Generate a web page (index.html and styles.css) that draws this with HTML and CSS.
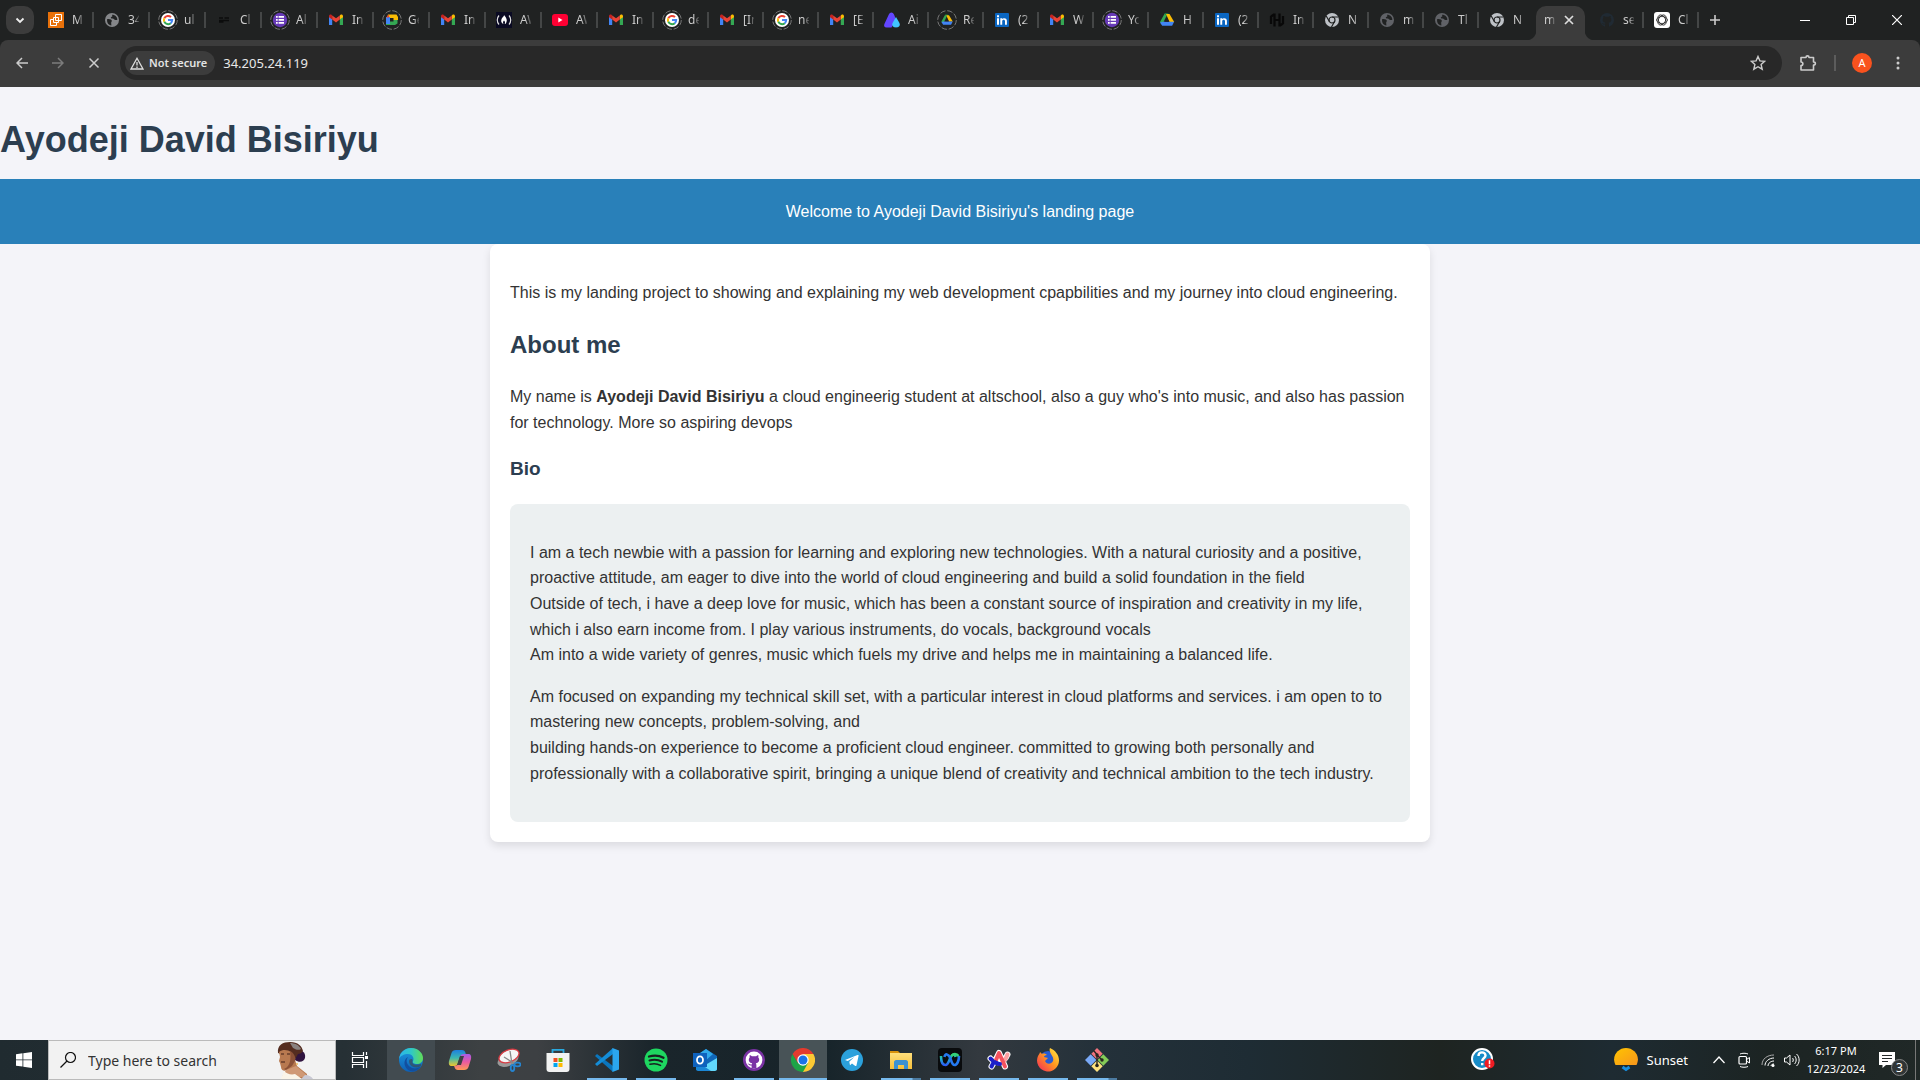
FILE: index.html
```html
<!DOCTYPE html>
<html lang="en">
<head>
<meta charset="utf-8">
<title>Ayodeji David Bisiriyu</title>
<link rel="stylesheet" href="styles.css">
</head>
<body>
<!-- Shared icon shapes -->
<svg class="defs" aria-hidden="true">
  <defs>
    <linearGradient id="gEdge" x1="0" y1="0" x2="1" y2="0"><stop offset="0" stop-color="#2bb5ec"/><stop offset=".5" stop-color="#2fc8c8"/><stop offset="1" stop-color="#62dd55"/></linearGradient>
    <linearGradient id="gEdge2" x1="0" y1="0" x2="0" y2="1"><stop offset="0" stop-color="#1d9ae0"/><stop offset="1" stop-color="#0d5fb4"/></linearGradient>
    <linearGradient id="gCopA" x1="0" y1="0" x2="0" y2="1"><stop offset="0" stop-color="#1d7fe0"/><stop offset=".5" stop-color="#3cb8b0"/><stop offset="1" stop-color="#f0c52c"/></linearGradient>
    <linearGradient id="gCopB" x1="0" y1="0" x2="0" y2="1"><stop offset="0" stop-color="#a55be8"/><stop offset=".5" stop-color="#ea5aa0"/><stop offset="1" stop-color="#ff9a55"/></linearGradient>
    <linearGradient id="gFox" x1="1" y1="0" x2="0" y2="1"><stop offset="0" stop-color="#fff04a"/><stop offset=".45" stop-color="#ff9a1f"/><stop offset="1" stop-color="#f5245c"/></linearGradient>
    <linearGradient id="gSun" x1="0" y1="0" x2="1" y2="1"><stop offset="0" stop-color="#ffc400"/><stop offset="1" stop-color="#f7961d"/></linearGradient>
    <linearGradient id="gWebex" x1="0" y1="0" x2="0" y2="1"><stop offset="0" stop-color="#2ad06c"/><stop offset=".4" stop-color="#20b0d0"/><stop offset="1" stop-color="#2a5df2"/></linearGradient>
    <linearGradient id="gFolder" x1="0" y1="0" x2="0" y2="1"><stop offset="0" stop-color="#ffdf7c"/><stop offset="1" stop-color="#f6bf3a"/></linearGradient>
  </defs>
  <symbol id="ring" viewBox="0 0 20 20"><circle cx="10" cy="10" r="9.300" fill="none" stroke="#777" stroke-width="1" stroke-dasharray="5.500 1.800"/></symbol>
  <symbol id="gmail" viewBox="0 0 20 20"><path fill="#4285f4" d="M3 6.500v8.500h3.200V8.700z"/><path fill="#34a853" d="M17 6.500v8.500h-3.200V8.700z"/><path fill="#c5221f" d="M3 6.200c0-1.600 1.700-2 2.700-1.200l.5.400v4.200L3 7.200z"/><path fill="#fbbc04" d="M17 6.200c0-1.600-1.700-2-2.700-1.200l-.5.400v4.200L17 7.200z"/><path fill="#ea4335" d="M6.200 5.400 10 8.300l3.800-2.900v4.200L10 12.500 6.200 9.600z"/></symbol>
  <symbol id="google" viewBox="0 0 20 20"><use href="#ring"/><circle cx="10" cy="10" r="7" fill="#fff"/><g fill="none" stroke-width="2"><path stroke="#ea4335" d="M6.300 8.300A4.200 4.200 0 0 1 13 7.100"/><path stroke="#fbbc05" d="M6.300 11.800a4.200 4.200 0 0 1 0-3.600"/><path stroke="#34a853" d="M12.800 13.200a4.200 4.200 0 0 1-6.500-1.500"/><path stroke="#4285f4" d="M10 10h4.200a4.200 4.200 0 0 1-1.500 3.200"/></g></symbol>
  <symbol id="globe" viewBox="0 0 20 20"><circle cx="10" cy="10" r="7" fill="currentColor"/><path fill="#202222" d="M5.200 9.100c1.500 0 3.800 0 4.500 1.200.5 1-.7 1.700-.5 2.900l.2 2.200c-2.900 0-4.900-3-4.200-6.300zM10 4.700l.4 1.500-1.400 1c-.7.800.6 1.500 1.700 1.400 1.200 0 1.500 1.400 2.700 1.500l1.900-.2C15.500 6.800 12.900 4.600 10 4.700z"/></symbol>
  <symbol id="form" viewBox="0 0 20 20"><use href="#ring"/><circle cx="10" cy="10" r="7.200" fill="#673ab7"/><path fill="#fff" d="M6 6h1.700v1.700H6zm2.600 0H14v1.700H8.600zM6 9h1.700v1.700H6zm2.600 0H14v1.700H8.600zM6 12h1.700v1.700H6zm2.600 0H14v1.700H8.600z"/></symbol>
  <symbol id="drive" viewBox="0 0 20 20"><path fill="#34a853" d="M7.700 3.500h3L5.200 14.800 3 12z"/><path fill="#188038" d="M7.700 3.500h4L10 7z"/><path fill="#fbbc04" d="M9 4h3.500l4.700 8h-4.600z"/><path fill="#4285f4" d="M5.800 11.800h11.300l-2 4H5.200L3 12.500z"/><path fill="#202222" d="m10 8 2 3.700H8z"/></symbol>
  <symbol id="linkedin" viewBox="0 0 20 20"><rect x="3" y="3" width="14" height="14" rx="1" fill="#0a66c2"/><path fill="#fff" d="M5 8.200h2v6.500H5zM5 5.200h2v2H5zM8.300 8.200h1.900v.9c.9-1.500 4.700-1.500 4.700 1.700v3.900H13v-3.400c0-2.100-2.800-2-2.800 0v3.400H8.300z"/></symbol>
  <symbol id="chromeGrey" viewBox="0 0 20 20"><circle cx="10" cy="10" r="7" fill="#bdc1c6"/><g fill="none" stroke="#202222" stroke-width="1.200"><circle cx="10" cy="10" r="3"/><path d="M10 7h6.500M7.400 11.500 4.200 6M12.600 11.500 9.500 17"/></g></symbol>
  <symbol id="github" viewBox="0 0 20 20"><circle cx="10" cy="10" r="7" fill="currentColor"/><path fill="var(--cat)" d="M8 17v-2.500c-2 .5-2.500-.8-3.300-1.500 1.500-.1 1.600 1.200 3.400.7l.4-.9C5.600 12.400 5 9.500 6.400 8L6.300 6c.9 0 1.500.5 2 .8h3.400c.5-.3 1.100-.8 2-.8l-.1 2c1.400 1.500.8 4.400-2.100 4.800.7.900.5 2 .5 4.200z"/></symbol>
</svg>

<header class="browser">
  <nav class="tabs" aria-label="Tabs">
    <button class="search-tabs" aria-label="Search tabs"><svg viewBox="0 0 12 12" width="12" height="12"><path d="m2.500 4.500 3.500 3.500 3.500-3.500" fill="none" stroke="#eee" stroke-width="1.800"/></svg></button>
    <div class="tab-list">
      <button class="tab wide"><svg class="fav" viewBox="0 0 20 20"><path fill="#e8710a" d="M2 2h16v16H2z"/><path fill="none" stroke="#fff" d="M9.500 4.500h6v6h-6zM7.500 7.500h5v5h-5zM7.500 9.500h-3v6h6v-3"/></svg><span>M</span></button>
      <button class="tab wide"><svg class="fav mid"><use href="#globe"/></svg><span>34</span></button>
      <button class="tab wide"><svg class="fav"><use href="#google"/></svg><span>ul</span></button>
      <button class="tab wide"><svg class="fav" viewBox="0 0 20 20"><path d="M5 8h4M5 10.500h10M10.500 8H15M5 12h4.500" stroke="#0b0c0c" stroke-width="1.500"/></svg><span>Cl</span></button>
      <button class="tab wide"><svg class="fav"><use href="#form"/></svg><span>Al</span></button>
      <button class="tab wide"><svg class="fav"><use href="#gmail"/></svg><span>In</span></button>
      <button class="tab wide"><svg class="fav" viewBox="0 0 20 20"><use href="#ring"/><path fill="#34a853" d="M4 9v6h9l2.500-1.500V10z"/><path fill="#fbbc04" d="M6 4.500h8.500L16 7v3H4z"/><path fill="#4285f4" d="M4 7h4v7H4z"/><path fill="#ea4335" d="M4 7.500 7 4.500v3z"/><path fill="#202222" d="M8 8h3.500v3.500H8z"/></svg><span>Ge</span></button>
      <button class="tab wide"><svg class="fav"><use href="#gmail"/></svg><span>In</span></button>
      <button class="tab wide"><svg class="fav" viewBox="0 0 20 20"><path fill="#0a0a23" d="M2 2h16v16H2z"/><path fill="none" stroke="#ddd" stroke-width="1.200" d="M5 5.500c-2.300 2.500-2.300 6.500 0 9M15 5.500c2.300 2.500 2.300 6.500 0 9"/><path fill="#fff" d="M10 5c2.500 3 3.500 5 2.300 7.500-.4 1-1 1.500-1.600 1.500.7-1.300.4-2.500-.7-3.500-1 1-1.300 2.300-.5 3.500-3-1-2.700-4.500-1-6.500C9.500 6.500 10 6 10 5z"/></svg><span>AW</span></button>
      <button class="tab wide"><svg class="fav" viewBox="0 0 20 20"><rect x="2" y="4" width="16" height="12" rx="3" fill="#ff0033"/><path fill="#fff" d="m8.300 7.500 4.200 2.500-4.200 2.500z"/></svg><span>AW</span></button>
      <button class="tab wide"><svg class="fav"><use href="#gmail"/></svg><span>In</span></button>
      <button class="tab"><svg class="fav"><use href="#google"/></svg><span>de</span></button>
      <button class="tab"><svg class="fav"><use href="#gmail"/></svg><span>[In</span></button>
      <button class="tab"><svg class="fav"><use href="#google"/></svg><span>ne</span></button>
      <button class="tab"><svg class="fav"><use href="#gmail"/></svg><span>[E</span></button>
      <button class="tab"><svg class="fav" viewBox="0 0 20 20"><path fill="#6246ff" d="M2.400 14 6.800 4.500c1.200-2.800 4-2.800 5.200 0l2 5-4.500 8H4.500c-2 0-3-1.800-2.100-3.500z"/><path fill="#41c4ff" d="m14 7 3.300 5.800c1.500 3-.6 4.700-3.300 4.700s-4.800-1.700-3.300-4.700z"/></svg><span>Ai</span></button>
      <button class="tab"><svg class="fav" viewBox="0 0 20 20"><use href="#ring"/><use href="#drive" x="2" y="2" width="16" height="16"/></svg><span>Re</span></button>
      <button class="tab"><svg class="fav"><use href="#linkedin"/></svg><span>(2</span></button>
      <button class="tab"><svg class="fav"><use href="#gmail"/></svg><span>W</span></button>
      <button class="tab"><svg class="fav"><use href="#form"/></svg><span>Yo</span></button>
      <button class="tab"><svg class="fav"><use href="#drive"/></svg><span>H</span></button>
      <button class="tab"><svg class="fav"><use href="#linkedin"/></svg><span>(2</span></button>
      <button class="tab"><svg class="fav" viewBox="0 0 20 20"><path fill="none" stroke="#080808" stroke-width="2.200" d="M4 6v8M7.500 3.500v13M12.500 3.500v13M16 6v8M7.500 10h5M4 6.500l3-2M16 13.500l-3 2"/></svg><span>In</span></button>
      <button class="tab"><svg class="fav"><use href="#chromeGrey"/></svg><span>N</span></button>
      <button class="tab"><svg class="fav dim"><use href="#globe"/></svg><span>m</span></button>
      <button class="tab"><svg class="fav dim"><use href="#globe"/></svg><span>Tl</span></button>
      <button class="tab plain"><svg class="fav"><use href="#chromeGrey"/></svg><span>N</span></button>
      <button class="tab active"><span>m</span><svg viewBox="0 0 10 10" width="10" height="10"><path d="m1 1 8 8m0-8-8 8" stroke="#ddd" stroke-width="1.700"/></svg></button>
      <button class="tab"><svg class="fav cat-dark"><use href="#github"/></svg><span>se</span></button>
      <button class="tab"><svg class="fav" viewBox="0 0 20 20"><rect x="2" y="2" width="16" height="16" rx="3" fill="#fff"/><g fill="none" stroke="#222" stroke-width=".8"><ellipse cx="10" cy="10" rx="5.500" ry="3.500"/><ellipse cx="10" cy="10" rx="5.500" ry="3.500" transform="rotate(60 10 10)"/><ellipse cx="10" cy="10" rx="5.500" ry="3.500" transform="rotate(120 10 10)"/></g></svg><span>Cl</span></button>
    </div>
    <button class="new-tab" aria-label="New tab"><svg viewBox="0 0 12 12" width="12" height="12"><path d="M6 1v10M1 6h10" stroke="#ccc" stroke-width="1.600"/></svg></button>
    <div class="window-buttons">
      <button aria-label="Minimize"><svg viewBox="0 0 10 10"><path d="M0 5.500h10" stroke="#fff"/></svg></button>
      <button aria-label="Restore"><svg viewBox="0 0 10 10"><path d="M.5 2.500h7v7h-7zM2.500 2.500v-2h7v7h-2" fill="none" stroke="#fff"/></svg></button>
      <button aria-label="Close"><svg viewBox="0 0 10 10"><path d="m0 0 10 10M10 0 0 10" stroke="#fff" stroke-width="1.200"/></svg></button>
    </div>
  </nav>
  <div class="toolbar">
    <div class="nav-buttons">
      <button aria-label="Back"><svg viewBox="0 0 12 12"><path d="M12 6H1M6 1 1 6l5 5" fill="none" stroke="#ccc" stroke-width="1.500"/></svg></button>
      <button aria-label="Forward"><svg viewBox="0 0 12 12"><path d="M0 6h11M6 1l5 5-5 5" fill="none" stroke="#7c7c7c" stroke-width="1.500"/></svg></button>
      <button aria-label="Stop"><svg viewBox="0 0 12 12"><path d="m1.500 1.500 9 9m0-9-9 9" stroke="#ccc" stroke-width="1.500"/></svg></button>
    </div>
    <div class="omnibox">
      <button class="chip"><svg viewBox="0 0 14 13" width="14" height="13"><path d="M7 1.300 13 12H1z" fill="none" stroke="#ddd" stroke-width="1.300"/><path d="M7 5v3.500M7 9.500V11" stroke="#ddd" stroke-width="1.300"/></svg>Not secure</button>
      <input class="url" type="text" value="34.205.24.119" aria-label="Address">
      <button class="star" aria-label="Bookmark"><svg viewBox="0 0 16 16" width="16" height="16"><path d="m8 1.500 1.900 4.400 4.800.4-3.600 3.200 1.100 4.700L8 11.700l-4.200 2.500 1.100-4.700-3.600-3.200 4.800-.4z" fill="none" stroke="#ccc" stroke-width="1.400"/></svg></button>
    </div>
    <button class="puzzle" aria-label="Extensions"><svg viewBox="0 0 18 18" width="18" height="18"><path d="M2 3.500h5c0-2.200 3-2.200 3 0h4.500V8c2.500 0 2.500 3 0 3v5H2v-4.500c2.500 0 2.500-3.500 0-3.500z" fill="none" stroke="#ccc" stroke-width="1.600" stroke-linejoin="round"/></svg></button>
    <span class="divider"></span>
    <button class="avatar">A</button>
    <button class="more" aria-label="Menu"><svg viewBox="0 0 4 16" width="4" height="16" fill="#ccc"><circle cx="2" cy="3" r="1.500"/><circle cx="2" cy="8" r="1.500"/><circle cx="2" cy="13" r="1.500"/></svg></button>
  </div>
</header>

<main class="page">
  <h1>Ayodeji David Bisiriyu</h1>
  <div class="banner">Welcome to Ayodeji David Bisiriyu's landing page</div>
  <article class="card">
    <p>This is my landing project to showing and explaining my web development cpapbilities and my journey into cloud engineering.</p>
    <h2>About me</h2>
    <p>My name is <strong>Ayodeji David Bisiriyu</strong> a cloud engineerig student at altschool, also a guy who's into music, and also has passion for technology. More so aspiring devops</p>
    <h3>Bio</h3>
    <section class="bio">
      <p>I am a tech newbie with a passion for learning and exploring new technologies. With a natural curiosity and a positive, proactive attitude, am eager to dive into the world of cloud engineering and build a solid foundation in the field<br>Outside of tech, i have a deep love for music, which has been a constant source of inspiration and creativity in my life, which i also earn income from. I play various instruments, do vocals, background vocals<br>Am into a wide variety of genres, music which fuels my drive and helps me in maintaining a balanced life.</p>
      <p>Am focused on expanding my technical skill set, with a particular interest in cloud platforms and services. i am open to to mastering new concepts, problem-solving, and<br>building hands-on experience to become a proficient cloud engineer. committed to growing both personally and professionally with a collaborative spirit, bringing a unique blend of creativity and technical ambition to the tech industry.</p>
    </section>
  </article>
</main>

<footer class="taskbar">
  <button class="start" aria-label="Start"><svg viewBox="0 0 16 16" width="16" height="16" fill="#fff"><path d="M0 2.200 6.500 1.300v6.200H0zM7.300 1.200 16 0v7.500H7.300zM0 8.300h6.500v6.300L0 13.700zM7.300 8.300H16V16l-8.700-1.200z"/></svg></button>
  <div class="search">
    <svg viewBox="0 0 16 16" width="16" height="16"><circle cx="10.500" cy="5.500" r="5" fill="none" stroke="#111" stroke-width="1.200"/><path d="M7 9 .5 15.500" stroke="#111" stroke-width="1.300"/></svg>
    <input type="text" placeholder="Type here to search" aria-label="Search">
    <svg class="portrait" viewBox="0 0 38 38" width="38" height="38"><path fill="#30143f" d="M19 9c6-1 10 3 9 8-1 4-6 5-10 2z"/><path fill="#542d20" d="M1 12C0 4 6 1 13 1c8 0 12 4 13 9-1 2-3 3-5 3l-4 7-5-4z"/><path fill="#8a8280" d="M13 2c5 0 9 2 11 6-3 2-6 0-8-1z"/><path fill="#b87950" d="M2 11c4-3 9-2 12 0l4 8 2 6 10 8v5H6l4-9c-3 2-6 0-6-3l-1-4-1-2 1-4z"/><path fill="#8b5137" d="M13 10c4 2 6 6 5 10l-3 5-6 4-2-1c7-3 7-11 6-18z"/><path fill="#cf9875" d="m9 29 10-4 13 11H5z"/><path fill="#faf4e8" d="M7 30c3 3 7 4 11 3l7 5H4z"/><path fill="#c9c9d4" d="M28 34c4 0 7 2 8 4H24z"/><path d="M4 13h3M10 13h3M4 21h4" stroke="#402018"/><circle cx="20" cy="23" r="1" fill="#f0c060"/></svg>
  </div>
  <div class="apps">
    <button class="app task-view" aria-label="Task view"><svg viewBox="0 0 24 24"><path d="M4.500 4v3.500h11V4M4.500 20v-3.500h11V20M4.500 9.500h11v5h-11zM18.500 4v3M18.500 13v7" fill="none" stroke="#fff" stroke-width="1.200"/><path fill="#fff" d="M17 8h3v3h-3z"/></svg></button>
    <button class="app lit" aria-label="Edge"><svg viewBox="0 0 24 24"><circle cx="12" cy="12" r="12" fill="url(#gEdge2)"/><path fill="url(#gEdge)" d="M0 11C1 4 6 0 12 0c7 0 12 5 12 10 0 4-3 6-6 6s-5-1-4-3c1-1 1-7-5-7-4 0-8 2-9 5z"/><path fill="#124f9f" d="M9 9c-3 4-1 9 4 11 3 1 7 0 9-2-3 6-10 7-14 3S5 11 9 9z"/><path fill="#3f484d" d="M13.500 13c-1 3 3 5 8 3 1 0 1 1 .3 2C18 21 10 19 10 13c0-2 4-3 3.500 0z" opacity=".65"/></svg></button>
    <button class="app" aria-label="Copilot"><svg viewBox="0 0 24 24"><path fill="url(#gCopA)" d="M8 2h6c2 0 3 1 3.500 3l.5 2h-3c-2 0-3 1-3.500 3L10 15c-.6 2-1.600 3-3.500 3H4c-3 0-3.500-2-3-5l2.500-8C4.200 3 5.500 2 8 2z"/><path fill="url(#gCopB)" d="M16 22h-6c-2 0-3-1-3.500-3L6 18c3 0 4-1 4.500-3L12 9c.6-2 1.600-3 4-3h4c3 0 3.500 2 3 5l-2.500 8c-.7 2-2 3-4.500 3z"/><path fill="#3b4144" d="M12 8h4l-3 9H9z"/></svg></button>
    <button class="app" aria-label="Snipping Tool"><svg viewBox="0 0 24 24"><ellipse cx="11" cy="12" rx="11" ry="6" transform="rotate(-22 11 12)" fill="#999"/><ellipse cx="12" cy="8" rx="10.500" ry="6" transform="rotate(-22 12 8)" fill="#f5f5f5" stroke="#d83b43" stroke-width="1.300"/><path d="m13 3 2 13M7 9l11 7" stroke="#888" stroke-width="1.300"/><g fill="none" stroke="#2684d0" stroke-width="1.800"><ellipse cx="15.500" cy="20" rx="1.800" ry="3"/><ellipse cx="20.500" cy="16.500" rx="3" ry="1.900"/></g></svg></button>
    <button class="app" aria-label="Store"><svg viewBox="0 0 24 24"><path d="M6.500 6V1.800h11V6" fill="none" stroke="#2aa9df" stroke-width="1.800"/><path fill="#f2f2f2" d="M.5 5h23v16c0 2-1 3-3 3h-17c-2 0-3-1-3-3z"/><path fill="#f25022" d="M7.500 10h4v4h-4z"/><path fill="#7fba00" d="M12.500 10h4v4h-4z"/><path fill="#00a4ef" d="M7.500 15h4v4h-4z"/><path fill="#ffb900" d="M12.500 15h4v4h-4z"/></svg></button>
    <button class="app open" aria-label="Visual Studio Code"><svg viewBox="0 0 24 24"><path fill="#0b76bd" d="m0 8 2-2 16 12v6z"/><path fill="#148dd8" d="m0 16 2 2L18 6V0z"/><path fill="#2ba6ee" d="m17.500 0 6.500 2.500v19L17.500 24z"/></svg></button>
    <button class="app open" aria-label="Spotify"><svg viewBox="0 0 24 24"><circle cx="12" cy="12" r="11.500" fill="#1ed760"/><g fill="none" stroke="#172220" stroke-linecap="round"><path d="M5 8.500c5-1.500 10.500-1 14.500 1.300" stroke-width="2.300"/><path d="M5.500 12.500c4.500-1.300 9-.8 12.500 1.200" stroke-width="2"/><path d="M6 16.300c4-1 7.500-.6 10.500 1.100" stroke-width="1.600"/></g></svg></button>
    <button class="app" aria-label="Outlook"><svg viewBox="0 0 24 24"><path fill="#1067b8" d="M3 8 13 1l11 7v14H3z"/><path fill="#30a9ea" d="m7 5 6-4 7 5-8 7z"/><path fill="#62d7fa" d="m24 10-15 9v4h13c1 0 2-1 2-2z"/><path fill="#1b87d6" d="m3 13 15 10H5c-1 0-2-1-2-2z"/><path fill="#0f62bd" d="M0 5h14v14H0z"/><ellipse cx="7" cy="12" rx="3" ry="3.700" fill="none" stroke="#fff" stroke-width="1.800"/></svg></button>
    <button class="app open" aria-label="GitHub Desktop"><svg class="cat-purple" viewBox="0 0 24 24"><circle cx="12" cy="12" r="11" fill="#7a32a4"/><use href="#github" x="0" y="0" width="24" height="24"/></svg></button>
    <button class="app open current" aria-label="Chrome"><svg viewBox="0 0 24 24"><path fill="#e33b2e" d="M1.600 6A12 12 0 0 1 22.400 6L12 12z"/><path fill="#fcc934" d="M22.400 6A12 12 0 0 1 12 24l-1-2 6-10-5-6z"/><path fill="#1ea446" d="M1.600 6A12 12 0 0 0 12 24l5-9-5-3-5 3z"/><path fill="#e33b2e" d="M1.600 6 7 15l5-9z"/><circle cx="12" cy="12" r="5.700" fill="#fff"/><circle cx="12" cy="12" r="4.500" fill="#1a73e8"/></svg></button>
    <button class="app" aria-label="Telegram"><svg viewBox="0 0 24 24"><circle cx="12" cy="12" r="11" fill="#2ba1dc"/><path fill="#fff" d="m5 12 12.500-5c1-.3 1.300.3 1 1.200l-2 9c-.2 1-.8 1-1.500.5l-3-2.200-2 1.800-.7-3.600 5-4.700-6.500 4z"/></svg></button>
    <button class="app open multi" aria-label="File Explorer"><svg viewBox="0 0 24 24"><path fill="#d9920c" d="M1 3h8l2 2H1z"/><path fill="url(#gFolder)" d="M1 5h22v16H1z"/><path fill="#3c91d2" d="M5 21v-7c0-1 1-2 2-2h10c1 0 2 1 2 2v7h-4v-4H9v4z"/></svg></button>
    <button class="app open" aria-label="Webex"><svg viewBox="0 0 24 24"><rect width="24" height="24" rx="4" fill="#090b0d"/><path d="M3 8c0 6 2 9 4.500 9S11 13 12.500 9.500 17 5 17.500 9" fill="none" stroke="url(#gWebex)" stroke-width="2.600"/><path d="M6.500 9c.5-4 4-3 5.500.5S14 17 16.500 17s4.500-4 4.500-9" fill="none" stroke="#2478ee" stroke-width="2.600"/><path d="M13.500 8c1.500-2.500 5-3 7 0" fill="none" stroke="#34cf78" stroke-width="2.400"/></svg></button>
    <button class="app open" aria-label="Arc"><svg viewBox="0 0 24 24"><g fill="none" stroke-linecap="round" stroke-linejoin="round"><path stroke="#fff" stroke-width="6" d="m4.500 18.500 2-3.500M3.500 10.500c4 5 13 6 17-4M8 13l4-8 6 13.500"/><path stroke="#1c20c8" stroke-width="4" d="m4.500 18.500 2-4M3.500 10.500c2 2.500 4 4 7 5"/><path stroke="#ff9ea0" stroke-width="4" d="M20.500 6.500c-1 3-2 5-4 7"/><path stroke="#f4525e" stroke-width="4" d="m9 12 3-7 6 13.500"/><path stroke="#1c20c8" stroke-width="4" d="M8 14c2 1.500 4 2 5 2"/></g></svg></button>
    <button class="app open" aria-label="Firefox"><svg viewBox="0 0 24 24"><circle cx="12" cy="12" r="9" fill="#295bd2"/><path fill="url(#gFox)" d="M14 0c5 2 9 7 9 12a11 11 0 1 1-21-4c1-2 2-3 2-4l2 2c2-1 4 0 5 1-2 0-3 1-3 2l4 1-3 3c1 3 6 4 8 0 1-3-1-5-2-7-1-2-2-4-1-6z"/></svg></button>
    <button class="app open multi" aria-label="Git Bash"><svg viewBox="0 0 24 24"><path fill="#f1737d" d="m12 0 5.700 5.700L12 11.400 6.300 5.700z"/><path fill="#79a9f7" d="m5.700 6.300 5.700 5.700-5.700 5.700L0 12z"/><path fill="#84cb57" d="M18.300 6.300 24 12l-5.700 5.700-5.700-5.700z"/><path fill="#ffe37e" d="m12 12.600 5.700 5.700L12 24l-5.700-5.700z"/><path d="m8.500 2.500 3.500 4v11M12 7l5 5" fill="none" stroke="#27251f" stroke-width="1.400"/><g fill="#27251f"><circle cx="12" cy="7" r="1.700"/><circle cx="12" cy="17.500" r="1.800"/><circle cx="17" cy="12" r="1.700"/></g></svg></button>
  </div>
  <div class="tray">
    <button class="help" aria-label="Help"><svg viewBox="0 0 24 24" width="24" height="24"><circle cx="11" cy="11" r="10" fill="#168bc7" stroke="#fff" stroke-width="2"/><path d="M7.500 8c0-5 7-4.500 7-.5 0 2.500-3.300 2.500-3.300 5.500M11.200 15v2.300" fill="none" stroke="#fff" stroke-width="2.400"/><circle cx="18.500" cy="15.500" r="5" fill="#ef1c23"/><path d="M18.500 12.300v4M18.500 17.300v1.400" stroke="#fff" stroke-width="1.500"/></svg></button>
    <button class="weather"><svg viewBox="0 0 24 24" width="24" height="24"><path fill="url(#gSun)" d="M1.500 17C-3 8 4 0 12 0s15 8 10.500 17z"/><path d="m8.500 19 3.500 2.500 3.500-2.500" fill="none" stroke="#168ee0" stroke-width="2.800"/></svg>Sunset</button>
    <button class="status chevron" aria-label="Hidden icons"><svg viewBox="0 0 16 16"><path d="m2.500 11 5.500-6 5.500 6" fill="none" stroke="#fff" stroke-width="1.300"/></svg></button>
    <button class="status" aria-label="Meet now"><svg viewBox="0 0 16 16"><rect x="3" y="4.500" width="7.500" height="7.500" rx="1" fill="none" stroke="#fff" stroke-width="1.200"/><path d="m10.500 7.500 3-2v5.500l-3-2M4 2c2-1 6-1 8 0M4 14.500c2 1 6 1 8 0" fill="none" stroke="#fff"/></svg></button>
    <button class="status" aria-label="Network"><svg viewBox="0 0 16 16"><g fill="none" stroke="#fff"><path stroke="#aaa" d="M2 13C2 7 7 3 14 3"/><path d="M5 13.500c0-4 4-7.500 9-7.500M8 14c0-3 3-5 6-5M11 14c0-1 1-2 3-2"/></g><circle cx="13" cy="13.500" r="1.500" fill="#fff"/></svg></button>
    <button class="status" aria-label="Volume"><svg viewBox="0 0 16 16"><path d="M.5 6h2L6 3v10l-3.500-3h-2zM8.500 6c1 1 1 3 0 4M10.500 4c2.200 2 2.200 6 0 8M12.500 2c3.500 3 3.500 9 0 12" fill="none" stroke="#fff"/></svg></button>
    <button class="clock"><span>6:17 PM</span><span>12/23/2024</span></button>
    <button class="notice" aria-label="Notifications"><svg viewBox="0 0 16 16" width="16" height="16"><path fill="#fff" d="M0 0h16v13H7l-3.500 3v-3H0z"/><path d="M3 3.500h10M3 6.500h10M3 9.500h6" stroke="#252a2b"/></svg><span class="count">3</span></button>
  </div>
</footer>
</body>
</html>
```
FILE: styles.css
```css
* { box-sizing: border-box; }

body {
  margin: 0;
  min-height: 100vh;
  display: flex;
  flex-direction: column;
  background: #f4f4f9;
  color: #333;
  font: 16px/1.6 "Liberation Sans", Arial, sans-serif;
}

button {
  padding: 0;
  border: 0;
  background: none;
  color: inherit;
  font: inherit;
  display: flex;
  align-items: center;
  justify-content: center;
  flex: none;
}

svg { display: block; flex: none; }
.defs { position: absolute; width: 0; height: 0; }

/* Browser window frame */
.browser {
  background: #202222;
  color: #ccc;
  font: 12px/16px "Noto Sans", "Open Sans", sans-serif;
}

.tabs { display: flex; height: 40px; overflow: hidden; }

.search-tabs {
  width: 28px;
  height: 28px;
  margin: 6px 4px 0 6px;
  border-radius: 10px;
  background: #3c3c3c;
}

.tab-list { display: flex; }

.tab {
  position: relative;
  justify-content: flex-start;
  gap: 6px;
  width: 55px;
  padding-left: 8px;
}
.tab.wide { width: 56px; }

.tab::after {
  content: "";
  position: absolute;
  right: 0;
  top: 12px;
  width: 2px;
  height: 16px;
  background: #444646;
}
.tab.plain::after { display: none; }

.tab span {
  width: 11px;
  overflow: hidden;
  white-space: nowrap;
  text-align: left;
  mask-image: linear-gradient(90deg, #000 50%, #0003);
}

.fav { width: 20px; height: 20px; }
.mid { color: #85878a; }
.dim { color: #606267; }
.cat-dark { color: #202a33; --cat: #202222; }
.cat-purple { color: #fff; --cat: #7a32a4; }

.tab.active {
  height: 34px;
  margin: 6px 4px 0 2px;
  width: 49px;
  padding: 0 0 6px 8px;
  gap: 9px;
  border-radius: 10px 10px 0 0;
  background: #3c3c3c;
}
.tab.active::before,
.tab.active::after {
  content: "";
  display: block;
  position: absolute;
  top: auto;
  bottom: 0;
  width: 10px;
  height: 10px;
}
.tab.active::before { left: -10px; background: radial-gradient(circle at 0 0, #202222 10px, #3c3c3c 11px); }
.tab.active::after { right: -10px; background: radial-gradient(circle at 100% 0, #202222 10px, #3c3c3c 11px); }

.new-tab { width: 32px; }

.window-buttons { display: flex; margin-left: auto; }
.window-buttons button { width: 46px; }
.window-buttons svg { width: 10px; height: 10px; }

.toolbar {
  display: flex;
  align-items: center;
  height: 47px;
  padding: 0 20px 1px 6px;
  border-radius: 8px 8px 0 0;
  background: #3c3c3c;
}

.nav-buttons { display: flex; gap: 4px; margin-right: 10px; }
.nav-buttons button { width: 32px; height: 32px; }
.nav-buttons svg { width: 12px; height: 12px; }

.omnibox {
  flex: 1;
  display: flex;
  align-items: center;
  height: 34px;
  padding: 0 16px 0 5px;
  border-radius: 17px;
  background: #282828;
}

.chip {
  gap: 5px;
  height: 24px;
  padding: 0 8px 0 5px;
  border-radius: 12px;
  background: #3c3c3c;
  color: #e3e3e3;
  font-size: 11px;
  font-weight: 600;
}

.url {
  flex: 1;
  min-width: 0;
  margin-left: 8px;
  padding: 0;
  border: 0;
  background: none;
  color: #e8e8e8;
  font: 13px/20px "Noto Sans", "Open Sans", sans-serif;
}

.puzzle { margin-left: 17px; }
.divider { width: 2px; height: 16px; margin: 0 16px 0 17px; background: #5c5c5c; }
.avatar {
  width: 20px;
  height: 20px;
  margin-right: 24px;
  border-radius: 50%;
  background: #f9521e;
  color: #fff;
  font-size: 11px;
}

/* Landing page */
.page { flex: 1; }

h1, h2, h3 { color: #2c3e50; }
h1 { margin: 24px 0 10px; font-size: 36px; }
h2 { margin: 20px 0; font-size: 24px; }
h3 { margin: 19px 0; font-size: 19px; }
p { margin: 16px 0; }

.banner {
  padding: 20px;
  background: #2980b9;
  color: #fff;
  text-align: center;
}

.card {
  display: flow-root;
  max-width: 940px;
  margin: 0 auto;
  padding: 20px;
  border-radius: 8px;
  background: #fff;
  box-shadow: 0 4px 8px #0000001a;
}

.bio {
  display: flow-root;
  padding: 20px;
  border-radius: 8px;
  background: #ecf0f1;
}

/* Desktop taskbar */
.taskbar {
  display: flex;
  height: 40px;
  background: linear-gradient(90deg, #202b30 0, #263035 18%, #3d4143 25%, #3d4043 28%, #1a252b 34%, #17242a 43%, #33393f 51%, #24313a 57%, #1e2c34 65%, #1e2421 75%, #1e2b32 84%, #1c2423 92%, #202827 100%);
  color: #fff;
  font: 14px/20px "Noto Sans", "Open Sans", sans-serif;
}

.start { width: 48px; }

.search {
  display: flex;
  align-items: center;
  gap: 12px;
  width: 288px;
  padding: 0 20px 0 11px;
  border: 1px solid #bbb;
  background: #f2f2f2;
}
.search input {
  flex: 1;
  min-width: 0;
  padding: 2px 0 0;
  border: 0;
  background: none;
  font: inherit;
}
.search input::placeholder { color: #333; opacity: 1; }

.apps { display: flex; gap: 1px; }
.app { position: relative; width: 48px; }
.app svg { width: 24px; height: 24px; }
.task-view { margin-right: 2px; }
.lit { background: #424b50; }
.current { background: #485357; }

.open::after {
  content: "";
  position: absolute;
  left: 4px;
  right: 4px;
  bottom: 0;
  height: 2px;
  background: #76b9ed;
}
.current::after { left: 0; right: 0; }
.multi::after { background: linear-gradient(90deg, #76b9ed 31px, #4c7ba1 32px); }

.tray { display: flex; margin-left: auto; }
.help { width: 48px; margin-right: 107px; }
.weather { gap: 9px; margin-right: 19px; font-size: 13px; }
.status { width: 24px; }
.status svg { width: 16px; height: 16px; }
.chevron { margin-right: 1px; }

.clock {
  flex-direction: column;
  width: 64px;
  font-size: 11px;
  line-height: 18px;
}

.notice {
  position: relative;
  width: 48px;
  padding-right: 10px;
  border-right: 1px solid #777;
  margin-right: 4px;
}
.count {
  position: absolute;
  left: 23px;
  top: 19px;
  width: 17px;
  height: 17px;
  border: 1px solid #888;
  border-radius: 50%;
  background: #303536;
  font-size: 12px;
  line-height: 15px;
}
```
